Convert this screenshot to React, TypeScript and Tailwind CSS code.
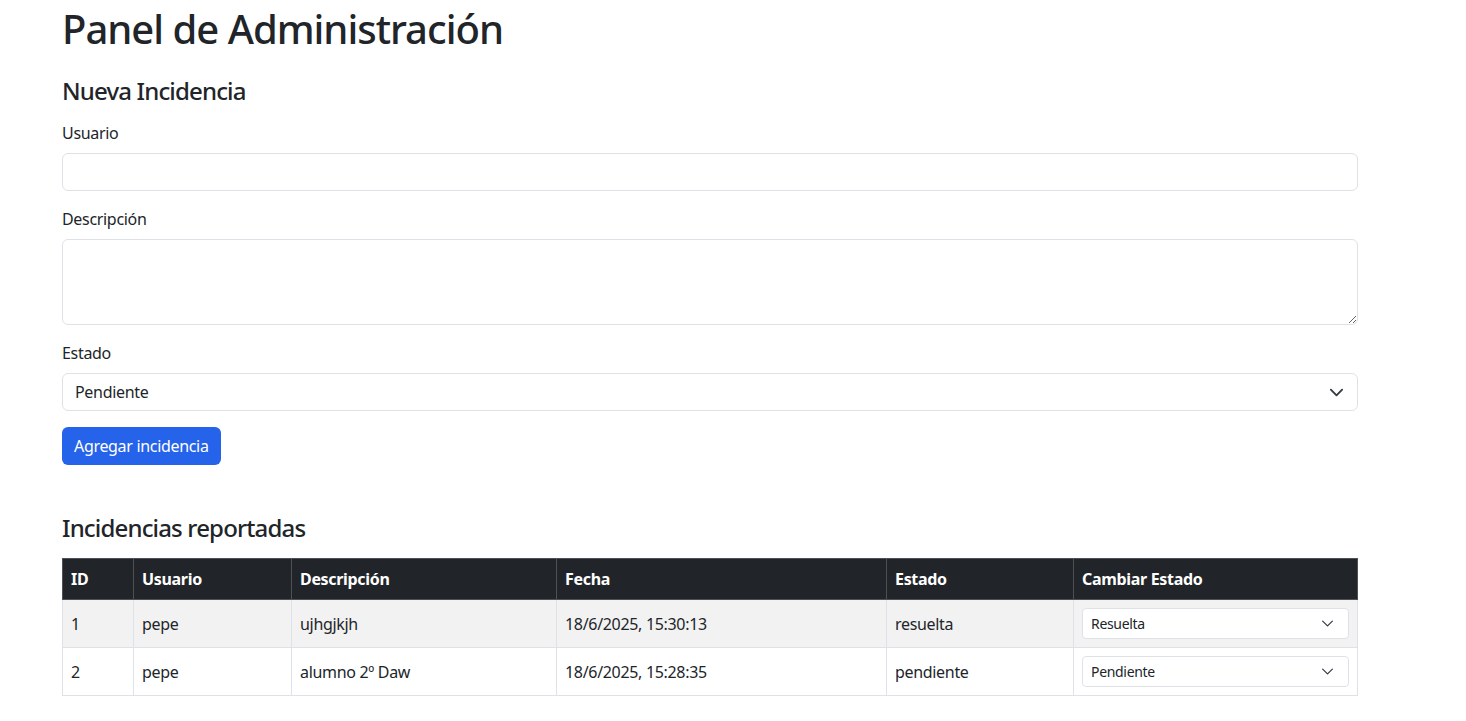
import { useState } from "react";

type Incidencia = {
  id: number;
  usuario: string;
  descripcion: string;
  fecha: string;
  estado: string;
};

const INCIDENCIAS: Incidencia[] = [
  { id: 1, usuario: "pepe", descripcion: "ujhgjkjh", fecha: "18/6/2025, 15:30:13", estado: "resuelta" },
  { id: 2, usuario: "pepe", descripcion: "alumno 2º Daw", fecha: "18/6/2025, 15:28:35", estado: "pendiente" },
];

function Chevron({ small }: { small?: boolean }) {
  return (
    <svg
      viewBox="0 0 16 16"
      className={small ? "w-[13px] h-[13px]" : "w-[15px] h-[15px]"}
      fill="none"
      stroke="#343a40"
      strokeWidth={small ? 1.5 : 2}
      strokeLinecap="round"
      strokeLinejoin="round"
    >
      <path d="m2 5 6 6 6-6" />
    </svg>
  );
}

function Select({ value, small }: { value: string; small?: boolean }) {
  return (
    <div
      className={`flex items-center justify-between bg-white border border-[#dee2e6] ${
        small ? "h-[31px] rounded-[4px] pl-[8px] pr-[14px] text-[14px]" : "h-[38px] rounded-[6px] pl-[12px] pr-[13px] text-[16px]"
      } text-[#212529]`}
    >
      <span>{value}</span>
      <Chevron small={small} />
    </div>
  );
}

export default function App() {
  const [usuario, setUsuario] = useState("");
  const [descripcion, setDescripcion] = useState("");

  return (
    <div
      className="min-h-screen bg-white text-[#212529] text-[16px] leading-[24px] tracking-[-0.02em]"
      style={{ fontFamily: '"Noto Sans", "Open Sans", sans-serif' }}
    >
      <div className="w-[1296px] ml-[62px] pt-[5px]">
        <h1 className="text-[40px] leading-[48px] font-medium mb-[23px] tracking-[-0.025em]">
          Panel de Administración
        </h1>

        <h4 className="text-[24px] leading-[29px] font-medium mb-[16px] tracking-[-0.035em]">Nueva Incidencia</h4>

        <div className="mb-[16px]">
          <label className="block mb-[8px]">Usuario</label>
          <input
            value={usuario}
            onChange={(e) => setUsuario(e.target.value)}
            className="block w-full h-[38px] px-[12px] border border-[#dee2e6] rounded-[6px] outline-none"
          />
        </div>

        <div className="mb-[16px]">
          <label className="block mb-[8px]">Descripción</label>
          <textarea
            value={descripcion}
            onChange={(e) => setDescripcion(e.target.value)}
            className="block w-full h-[86px] px-[12px] py-[6px] border border-[#dee2e6] rounded-[6px] outline-none resize-y"
          />
        </div>

        <div className="mb-[16px]">
          <label className="block mb-[8px]">Estado</label>
          <Select value="Pendiente" />
        </div>

        <button
          type="button"
          className="h-[38px] px-[12px] rounded-[6px] bg-[#2563eb] text-white text-[16px]"
        >
          Agregar incidencia
        </button>

        <h4 className="text-[24px] leading-[29px] font-medium mt-[48px] mb-[16px] tracking-[-0.035em]">
          Incidencias reportadas
        </h4>

        <table className="w-full table-fixed border-collapse">
          <colgroup>
            <col className="w-[71px]" />
            <col className="w-[158px]" />
            <col className="w-[265px]" />
            <col className="w-[330px]" />
            <col className="w-[187px]" />
            <col />
          </colgroup>
          <thead>
            <tr className="bg-[#212529] text-white">
              {["ID", "Usuario", "Descripción", "Fecha", "Estado", "Cambiar Estado"].map((h) => (
                <th
                  key={h}
                  className="text-left font-bold px-[8px] py-[8px] h-[41px] border border-[#4d5154]"
                >
                  {h}
                </th>
              ))}
            </tr>
          </thead>
          <tbody>
            {INCIDENCIAS.map((inc, i) => (
              <tr key={inc.id} className={i % 2 === 0 ? "bg-[#f2f2f2]" : "bg-white"}>
                <td className="px-[8px] py-[8px] border border-[#dee2e6]">{inc.id}</td>
                <td className="px-[8px] py-[8px] border border-[#dee2e6]">{inc.usuario}</td>
                <td className="px-[8px] py-[8px] border border-[#dee2e6]">{inc.descripcion}</td>
                <td className="px-[8px] py-[8px] border border-[#dee2e6]">{inc.fecha}</td>
                <td className="px-[8px] py-[8px] border border-[#dee2e6]">{inc.estado}</td>
                <td className="px-[8px] py-[8px] border border-[#dee2e6]">
                  <Select small value={inc.estado === "resuelta" ? "Resuelta" : "Pendiente"} />
                </td>
              </tr>
            ))}
          </tbody>
        </table>
      </div>
    </div>
  );
}
